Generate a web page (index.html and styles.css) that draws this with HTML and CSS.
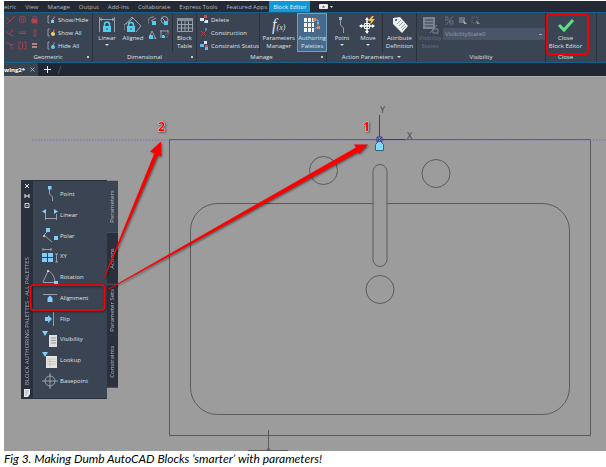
FILE: index.html
```html
<!DOCTYPE html>
<html lang="en">
<head>
  <meta charset="UTF-8">
  <title>AutoCAD Block Editor</title>
  <link rel="stylesheet" href="styles.css">
</head>
<body>
  <figure>
    <div class="app">

      <nav class="menu">
        <a href="#">etric</a>
        <a href="#">View</a>
        <a href="#">Manage</a>
        <a href="#">Output</a>
        <a href="#">Add-ins</a>
        <a href="#">Collaborate</a>
        <a href="#">Express Tools</a>
        <a href="#">Featured Apps</a>
        <a href="#" class="active">Block Editor</a>
        <button class="menu-more" aria-label="Ribbon options">
          <svg width="16" height="6" viewBox="0 0 16 6"><rect width="9" height="5" rx="1" fill="#e8eaed"/><path d="M3 3.500h3L4.500 1.500z" fill="#555"/><path d="M11 2h3l-1.500 2z" fill="#ddd"/></svg>
        </button>
      </nav>

      <div class="ribbon">
        <section class="panel geometric">
          <div class="tools">
            <div class="icons three">
              <svg viewBox="0 0 9 9" class="red"><path d="M0 2l4 4L9 1M4 6L1 9"/></svg>
              <svg viewBox="0 0 9 9" class="red"><circle cx="4.500" cy="4.500" r="3.300"/><circle cx="4.500" cy="4.500" r="1.300"/></svg>
              <svg viewBox="0 0 9 9" class="red"><rect x="2" y="4" width="5" height="4" fill="#b5434e"/><path d="M3 4V2.500a1.500 1.500 0 0 1 3 0V4"/></svg>
              <svg viewBox="0 0 9 9" class="red"><path d="M0 3l3 3 4-4M3 6l4 2"/></svg>
              <svg viewBox="0 0 9 9" class="red"><path d="M1 4h7M1 5.500h7"/></svg>
              <svg viewBox="0 0 9 9" class="red"><path d="M4 1v7M6 1v7M3 8h3"/></svg>
              <svg viewBox="0 0 9 9" class="red"><path d="M0 2h3l4 6M4 4l4-1"/></svg>
              <svg viewBox="0 0 9 9" class="red"><path d="M3 1H1v7h2M6 1h2v7H6M4.500 1v7"/></svg>
              <svg viewBox="0 0 9 9" class="red"><path d="M2 3h5M2 6h5" stroke="#d99" stroke-width="1.500"/></svg>
            </div>
            <div class="list">
              <button><svg viewBox="0 0 9 9"><path d="M2.500 1H1v7h1.500M4 6l4-4" class="line"/><circle cx="7" cy="2" r="1" fill="#b5434e"/><path d="M4 5h3v3H4z" fill="#7fcbe8"/></svg>Show/Hide</button>
              <button><svg viewBox="0 0 9 9"><path d="M2.500 1H1v7h1.500M4 6l4-4" class="line"/><circle cx="7" cy="2" r="1" fill="#b5434e"/><circle cx="6" cy="6" r="2" fill="#f2cf6b"/></svg>Show All</button>
              <button><svg viewBox="0 0 9 9"><path d="M2.500 1H1v7h1.500M4 6l4-4" class="line"/><circle cx="7" cy="2" r="1" fill="#b5434e"/><circle cx="6" cy="6" r="2" fill="#5fc3e4"/></svg>Hide All</button>
            </div>
          </div>
          <h2>Geometric<i></i></h2>
        </section>

        <section class="panel dimensional">
          <div class="tools">
            <button class="big drop">
              <svg viewBox="0 0 18 18"><path d="M1.500 1v15M16.500 1v15M2 3.500h14M4 2L2 3.500 4 5M14 2l2 1.500L14 5" class="line"/><path d="M6.500 11V8.500a2.500 2.500 0 0 1 5 0V11" fill="none" stroke="#55cdea" stroke-width="1.500"/><rect x="5" y="10" width="8" height="6" fill="#55cdea"/><rect x="8.500" y="12" width="1" height="2" fill="#245"/></svg>
              Linear
            </button>
            <button class="big">
              <svg viewBox="0 0 18 18"><path d="M2 8L8 1l9 9M4 7l5-5M0 14V9l3-2M12 16l5-6" class="line"/><path d="M4.500 11V9a2.500 2.500 0 0 1 5 0v2" fill="none" stroke="#55cdea" stroke-width="1.500"/><rect x="3" y="10" width="8" height="6" fill="#55cdea"/><rect x="6.500" y="12" width="1" height="2" fill="#245"/></svg>
              Aligned
            </button>
            <div class="icons two">
              <svg viewBox="0 0 9 9"><path d="M0 8V5c1-4 4-4 6-4M3 5l5-3" class="line"/><path d="M4 5h4v4H4z" fill="#55cdea"/></svg>
              <svg viewBox="0 0 9 9"><circle cx="4.500" cy="4" r="3.500" class="line"/><path d="M2 2l4 4" class="line"/><path d="M4 5h4v4H4z" fill="#55cdea"/></svg>
              <svg viewBox="0 0 9 9"><path d="M1 8l3-7 4 8M1 8h7" class="line"/><path d="M1 5h4v4H1z" fill="#55cdea"/></svg>
              <svg viewBox="0 0 9 9"><path d="M0 1h8M1 0v8M8 0v3" class="line"/><path d="M2 5h3v3H2z" fill="#55cdea"/><path d="M4 6l4-4v4L6 8" stroke="#b5434e" fill="none"/></svg>
            </div>
            <button class="big split table">
              <svg viewBox="0 0 18 18"><path d="M1.500 2.500h15v13h-15zM1.500 8.500h15M1.500 12h15M5.500 5v10M9 5v10M12.500 5v10" class="line"/><path d="M1 2h16v3H1z" fill="#89909b"/></svg>
              Block<br>Table
            </button>
          </div>
          <h2>Dimensional<i></i></h2>
        </section>

        <section class="panel manage">
          <div class="tools">
            <div class="list">
              <button><svg viewBox="0 0 9 9"><path d="M0 3h4v3H0zM5 5h3v3H5z" fill="#dce3ea"/><path d="M4 0h3v3H4z" fill="#c8505a"/><path d="M4 6h1v2H4z" fill="#69b6e8"/></svg>Delete</button>
              <button><svg viewBox="0 0 9 9"><path d="M1 8L7 2M1 3l5 5" stroke="#b5434e" fill="none"/><path d="M5 0h2v3H5z" fill="#597ca0"/></svg>Construction</button>
              <button><svg viewBox="0 0 9 9"><path d="M0 3h4v3H0zM5 6h3v3H5z" fill="#69b6e8"/><path d="M4 0h3v3H4z" fill="#dce3ea"/><path d="M5 4h3v2H5z" fill="#c8505a"/></svg>Constraint Status</button>
            </div>
            <button class="big split params">
              <span class="fx">f<small>(x)</small></span>
              Parameters<br>Manager
            </button>
            <button class="big pressed">
              <svg viewBox="0 0 18 18"><path d="M1 2h3v4H1zM5 2h3v4H5zM9 2h2v4H9zM1 7h3v4H1zM5 7h3v4H5zM9 7h2v4H9zM1 12h3v4H1zM5 12h3v4H5zM9 12h2v4H9z" fill="#f4f4f4"/><path d="M11 4h4v5M12 13l4-3" class="line"/><path d="M10 2h3v3h-3zM14 10h3v3h-3z" fill="#e58a4c"/><path d="M14 6h2v2h-2z" fill="#69b6e8"/></svg>
              Authoring<br>Palettes
            </button>
          </div>
          <h2>Manage<i></i></h2>
        </section>

        <section class="panel action">
          <div class="tools">
            <button class="big drop">
              <svg viewBox="0 0 18 18"><path d="M7.500 3v6l3 3v5" class="line"/><path d="M6 1h3v3H6z" fill="#69c4f5"/></svg>
              Point
            </button>
            <button class="big drop">
              <svg viewBox="0 0 18 18"><path d="M8 3v14M1 10h14" stroke="#fff" stroke-width="1.500"/><path d="M8 1l2 3H6zM8 18l2-3H6zM0 10l3-2v4zM16 10l-3-2v4z" fill="#fff"/><path d="M5.500 7.500h5v5h-5z" fill="none" stroke="#fff"/><path d="M13 0l-4 5h3l-1 4 5-6h-3l2-3z" fill="#f6c04c"/></svg>
              Move
            </button>
            <button class="big split attr">
              <svg viewBox="0 0 18 18"><path d="M2 2l7-1 8 9-6 7-9-9z" fill="#eceff2"/><circle cx="5" cy="4" r="1" fill="#3b4453"/><path d="M6 8l4-4M8 10l4-4M10 12l4-4M11 14l4-4" stroke="#777f8c" stroke-width=".7"/></svg>
              Attribute<br>Definition
            </button>
          </div>
          <h2>Action Parameters<b></b></h2>
        </section>

        <section class="panel visibility">
          <div class="tools">
            <button class="big" disabled>
              <svg viewBox="0 0 18 18"><path d="M2 1h12v12H2z" fill="#7b8390"/><path d="M4 4h8M4 7h8M4 10h8" stroke="#3b4453"/><path d="M16 9l-7 8M12 13h5v4h-5z" fill="none" stroke="#7b8390"/></svg>
              Visibility<br>States
            </button>
            <div class="states">
              <div class="icons">
                <svg viewBox="0 0 9 9"><path d="M0 1h3v3H0zM5 5h3v3H5zM8 0L1 9" fill="none" stroke="#69717e"/></svg>
                <svg viewBox="0 0 9 9"><path d="M1 1h6v6H1z" fill="#69717e"/><path d="M5 4l4 4H6z" fill="#a4abb5"/></svg>
                <svg viewBox="0 0 9 9"><path d="M1 1h6v6H1z" fill="none" stroke="#69717e" stroke-dasharray="1 1"/><path d="M5 4l4 4H6z" fill="#89909b"/></svg>
              </div>
              <select aria-label="Visibility state" disabled><option>VisibilityState0</option></select>
            </div>
          </div>
          <h2>Visibility</h2>
        </section>

        <section class="panel close">
          <div class="tools">
            <button class="big">
              <svg viewBox="0 0 18 18"><path d="M2 9l5 5 9-10" fill="none" stroke="#5fdc86" stroke-width="3"/></svg>
              Close<br>Block Editor
            </button>
          </div>
          <h2>Close</h2>
        </section>
      </div>

      <div class="files">
        <a href="#" class="file">wing2*<svg width="5" height="5" viewBox="0 0 5 5"><path d="M.5 .5l4 4M4.500 .5l-4 4" stroke="#b8bdc6" stroke-width=".8"/></svg></a>
        <button aria-label="New drawing"><svg width="9" height="9" viewBox="0 0 9 9"><path d="M4.500 1v7M1 4.500h7" stroke="#e8eaed"/></svg></button>
        <svg width="5" height="8" viewBox="0 0 5 8"><path d="M4 0L1 8" stroke="#4a5260"/></svg>
      </div>

      <div class="canvas">
        <!-- sink block -->
        <svg class="drawing" viewBox="4 77 602 374">
          <g fill="none" stroke="#5b5b5b">
            <path d="M169.500 139.500h421v296h-421z"/>
            <rect x="190.500" y="203.500" width="379" height="211" rx="27"/>
            <rect x="373" y="164.500" width="14" height="102" rx="7" fill="#9c9c9c"/>
            <circle cx="323.500" cy="170.500" r="14"/>
            <circle cx="436" cy="173.500" r="14"/>
            <circle cx="380" cy="289.500" r="14"/>
            <path d="M268.500 430v20M248 450.500h40"/>
            <circle cx="268.500" cy="450" r="1.500"/>
          </g>
          <path d="M32 140h574" stroke="#6c6cc4" stroke-dasharray="1.500 1.500"/>
          <path d="M379.500 115v22M382 139.500h23" stroke="#444"/>
          <path d="M377 137h5v5h-5zM377 137l5 5M382 137l-5 5" stroke="#3f3f8f" fill="none"/>
          <path d="M375.500 150.500v-6l3-3h2l3 3v6z" fill="#7fdcff" stroke="#3a6475"/>
          <text x="380" y="113" class="axis">Y</text>
          <text x="407" y="139" class="axis">X</text>
        </svg>

        <div class="palette">
          <div class="palette-bar">
            <svg width="8" height="28" viewBox="0 0 8 28"><path d="M2 2l4 4M6 2L2 6M2 12v4M6 12v4M2 14h4" stroke="#e8eaed" fill="none"/><path d="M2 21.500h4v4H2zM3.500 23.500h1" stroke="#d5d8dd" fill="none"/></svg>
            <span>BLOCK AUTHORING PALETTES - ALL PALETTES</span>
            <svg width="8" height="8" viewBox="0 0 8 8"><path d="M1 0h6v5L5 8H1z" fill="#e8eaed"/><path d="M2 2h4M2 4h3M2 6h2" stroke="#888" stroke-width=".6"/></svg>
          </div>
          <ul>
            <li><svg viewBox="0 0 18 18"><path d="M7.500 4v5l3 3v4" class="line"/><path d="M6 1h3.500v3.500H6z" fill="#84cdfa"/></svg>Point</li>
            <li><svg viewBox="0 0 18 18"><path d="M3.500 8v6M14.500 8v6M4 12.500h10" class="line"/><path d="M4 3v5L0 5.500zM12 3v5l4-2.500z" fill="#84cdfa"/></svg>Linear</li>
            <li><svg viewBox="0 0 18 18"><path d="M2 8l8 7M2 8l3-3" class="line"/><circle cx="2" cy="9" r="1" fill="#ddd"/><path d="M4 1h4v4H4zM12 9h4v4h-4z" fill="#84cdfa"/></svg>Polar</li>
            <li><svg viewBox="0 0 18 18"><path d="M1 2.500h8M1 1v3M9 1v3M14.500 7v8M13 7h3M13 15h3" class="line"/><path d="M0 6h5v4H0zM6 6h5v4H6zM0 11h5v4H0zM6 11h5v4H6z" fill="#84cdfa"/></svg>XY</li>
            <li><svg viewBox="0 0 18 18"><path d="M1 14.500h12M1 14L6 3c4 1 6 5 7 10" class="line"/><circle cx="6" cy="3" r="1" fill="#eee"/><path d="M12 13h4v3h-4z" fill="#84cdfa"/></svg>Rotation</li>
            <li><svg viewBox="0 0 18 18"><path d="M1 5.500h14" class="line"/><path d="M5.500 13V9L8 6.500 10.500 9v4z" fill="#84cdfa"/></svg>Alignment</li>
            <li><svg viewBox="0 0 18 18"><path d="M11.500 2v14" class="line"/><path d="M3 7h3V5l4 4-4 4v-2H3z" fill="#84cdfa"/></svg>Flip</li>
            <li><svg viewBox="0 0 18 18"><path d="M0 1h6L3 6z" fill="#84cdfa"/><path d="M7 5h8v12H7z" fill="#dde0e2"/><path d="M9 8h5M9 10.500h5M9 13h5" stroke="#777" stroke-width=".7"/></svg>Visibility</li>
            <li><svg viewBox="0 0 18 18"><path d="M0 1h6L3 6z" fill="#84cdfa"/><path d="M4 5h11v12H4z" fill="#e5e5e0"/><path d="M5 8h9M5 10.500h9M5 13h9M8 8v8" stroke="#aaa" stroke-width=".5"/></svg>Lookup</li>
            <li><svg viewBox="0 0 18 18"><circle cx="8" cy="9" r="5" class="line"/><path d="M8 1v16M0 9h16" class="line"/></svg>Basepoint</li>
          </ul>
          <div class="palette-tabs">
            <button class="current">Parameters</button>
            <button>Actions</button>
            <button>Parameter Sets</button>
            <button>Constraints</button>
          </div>
        </div>

        <!-- callouts -->
        <svg class="callouts" viewBox="4 77 602 374">
          <g class="shadow" fill="#f00">
            <path d="M104 277L154.500 153l-4.500-1.500 11-10v15l-3-1.500L105 277z"/>
            <path d="M108 289L356 147.500l-2-3h14l-9 9.500-1-2L108 290z"/>
            <rect x="30.500" y="285" width="74" height="25" rx="3" fill="none" stroke="#f00" stroke-width="1.500"/>
            <text x="158" y="131" class="number">2</text>
            <text x="363" y="131" class="number">1</text>
          </g>
        </svg>
      </div>
    </div>
    <figcaption>Fig 3. Making Dumb AutoCAD Blocks ‘smarter’ with parameters!</figcaption>
  </figure>
</body>
</html>
```
FILE: styles.css
```css
body {
  margin: 0;
  background: #fff;
}

figure {
  margin: 1px 0 0 4px;
}

.app {
  overflow: hidden;
  font: 6px/8px "Open Sans", sans-serif;
  color: #dfe3e8;
}

button {
  padding: 0;
  border: 0;
  background: none;
  font: inherit;
  color: inherit;
}

a {
  color: inherit;
  text-decoration: none;
}

svg {
  display: block;
  flex: none;
}

.line {
  fill: none;
  stroke: #aeb5bf;
  stroke-width: 0.8;
}

/* menu */
.menu {
  display: flex;
  gap: 9px;
  height: 11px;
  background: #232a35;
  line-height: 12px;
  color: #b5bbc4;
  white-space: nowrap;
}

.menu .active {
  padding: 0 4px;
  margin-left: -7px;
  background: #0e9ad8;
  color: #e9f5fb;
}

.menu-more {
  padding-top: 1px;
}

/* ribbon */
.ribbon {
  display: flex;
  border-top: 1px solid #17608a;
  border-bottom: 1px solid #17608a;
  background: #3b4453;
}

.panel {
  display: flex;
  flex-direction: column;
  flex: none;
  box-sizing: border-box;
  border-right: 1px solid #2b323e;
}

.geometric { width: 89px; }
.dimensional { width: 104px; }
.manage { width: 130px; }
.action { width: 90px; }
.visibility { width: 129px; }
.close { width: 51px; }

.panel h2 {
  position: relative;
  margin: 0;
  height: 10px;
  font-size: 6px;
  font-weight: normal;
  line-height: 11px;
  text-align: center;
}

.panel h2 i {
  position: absolute;
  right: 3px;
  top: 4px;
  width: 2px;
  height: 2px;
  background: #c3c8d0;
}

.panel h2 b,
.drop::after {
  display: inline-block;
  border: 2px solid transparent;
  border-top-color: #d5d9df;
  border-bottom: 0;
}

.panel h2 b {
  margin: 0 0 1px 4px;
}

.drop::after {
  content: "";
  display: block;
  margin: 2px auto 0;
}

.tools {
  display: flex;
  height: 39px;
}

.icons {
  display: grid;
  place-items: center;
}

.icons svg,
.list svg {
  width: 9px;
  height: 9px;
}

.red {
  fill: none;
  stroke: #a5444f;
  stroke-width: 0.9;
}

.three {
  grid-template-columns: repeat(3, 12px);
  padding-right: 4px;
}

.two {
  grid-template-columns: repeat(2, 12px);
  height: 28px;
}

.list {
  display: grid;
  padding-left: 3px;
  white-space: nowrap;
}

.list button {
  display: flex;
  align-items: center;
  gap: 2px;
}

.big {
  display: flex;
  flex-direction: column;
  flex: none;
  align-items: center;
  width: 26px;
  padding-top: 3px;
  white-space: nowrap;
}

.big svg {
  width: 18px;
  height: 18px;
}

.split {
  border-left: 1px solid #2b323e;
}

.dimensional .tools {
  padding-left: 1px;
}

.table {
  margin-left: 2px;
  width: 24px;
}

.manage .list {
  width: 60px;
}

.params {
  width: 38px;
}

.pressed {
  width: 30px;
  background: #466a8c;
  box-shadow: inset 0 0 0 1px #6f9fc4;
}

.fx {
  height: 18px;
  font: italic 16px/18px "Liberation Serif", serif;
}

.fx small {
  font-size: 8px;
}

.action .tools {
  padding-left: 2px;
}

.attr {
  width: 34px;
  margin-left: 1px;
}

.visibility .big {
  color: #69717e;
}

.states {
  flex: 1;
}

.states .icons {
  grid-template-columns: repeat(3, 13px);
  height: 15px;
}

.states select {
  display: block;
  width: 100%;
  height: 12px;
  padding: 0 2px;
  border: 0;
  appearance: none;
  background: #4a5569 linear-gradient(#a4abb5, #a4abb5) no-repeat right 3px center / 3px 1px;
  font: 6px/12px "Open Sans", sans-serif;
  color: #959daa;
  opacity: 1;
}

.close .tools {
  position: relative;
}

.close .big {
  width: 39px;
}

.close .big::before {
  content: "";
  position: absolute;
  left: 0;
  top: 0;
  width: 39px;
  height: 38px;
  border: 2px solid #f00000;
  border-radius: 4px;
}

.close h2 {
  width: 39px;
}

/* file tabs */
.files {
  display: flex;
  align-items: center;
  gap: 5px;
  height: 13px;
  border-bottom: 1px solid #aaa;
  background: #212732;
}

.file {
  display: flex;
  align-items: center;
  gap: 5px;
  width: 34px;
  height: 13px;
  background: #39424f;
  font-weight: bold;
  color: #fff;
}

/* drawing area */
.canvas {
  position: relative;
  overflow: hidden;
  background: #9c9c9c;
}

.drawing {
  width: 100%;
}

.axis {
  font: 9px "Open Sans", sans-serif;
  fill: #444;
}

.callouts {
  position: absolute;
  left: 0;
  top: 0;
  width: 100%;
  pointer-events: none;
}

.shadow {
  filter: drop-shadow(1px 1px 1px rgba(0, 0, 0, 0.5));
}

.number {
  font: bold 12px "Open Sans", sans-serif;
  stroke: #ddd;
  stroke-width: 1px;
  paint-order: stroke;
}

/* palette */
.palette {
  position: absolute;
  left: 17px;
  top: 103px;
  display: flex;
  width: 97px;
  height: 219px;
}

.palette-bar {
  display: flex;
  flex-direction: column;
  align-items: center;
  justify-content: space-between;
  box-sizing: border-box;
  width: 12px;
  padding: 2px 0;
  background: #2a303c;
}

.palette-bar span {
  margin-top: auto;
  margin-bottom: 4px;
  writing-mode: vertical-rl;
  transform: rotate(180deg);
  white-space: nowrap;
  color: #a7adb7;
}

.palette ul {
  display: grid;
  grid-auto-rows: 1fr;
  flex: 1;
  margin: 0;
  padding: 3px 0 7px 9px;
  border-top: 1px solid #2a303c;
  border-bottom: 1px solid #2a303c;
  background: #3b4453;
  list-style: none;
}

.palette li {
  display: flex;
  align-items: center;
}

.palette li svg {
  width: 18px;
  height: 18px;
}

.palette-tabs {
  display: grid;
  grid-auto-rows: 1fr;
  width: 11px;
  height: 207px;
  margin-top: 1px;
}

.palette-tabs button {
  writing-mode: vertical-rl;
  transform: rotate(180deg);
  border-top: 1px solid #4b5362;
  background: #2a303c;
  line-height: 11px;
  white-space: nowrap;
  color: #b5bbc4;
}

.palette-tabs .current {
  border-top: 0;
  background: #3b4453;
}

figcaption {
  font: italic 12px/15px Lato, sans-serif;
  color: #000;
  white-space: nowrap;
}
```
